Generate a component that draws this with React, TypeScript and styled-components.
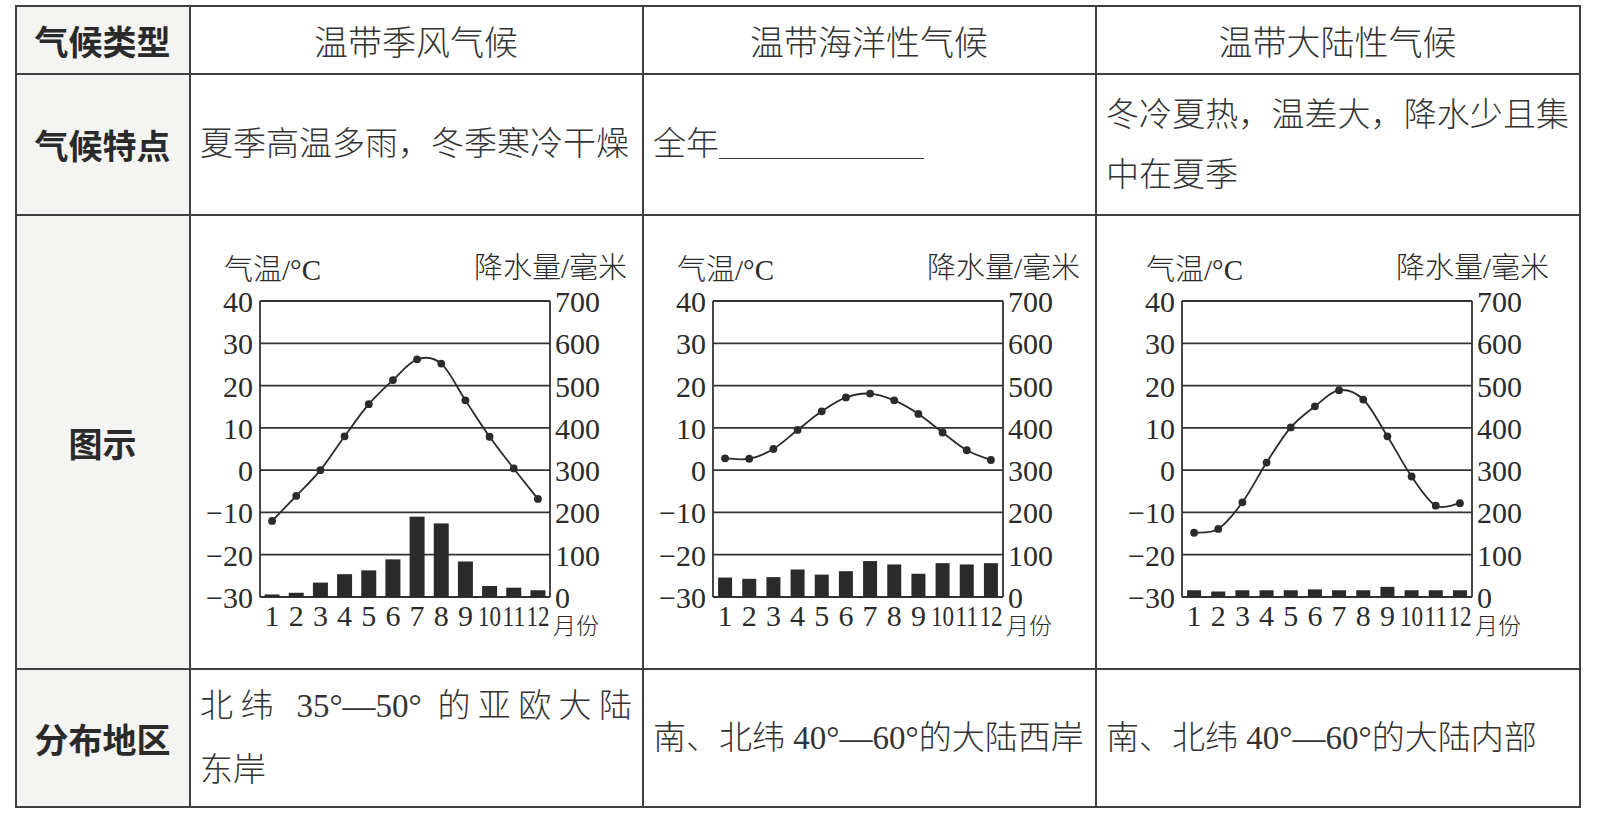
import React from "react";
import styled, { createGlobalStyle } from "styled-components";

const GlobalStyle = createGlobalStyle`
  html, body {
    margin: 0;
    padding: 0;
    background: #fff;
  }
  body {
    font-family: "Liberation Serif", "Noto Sans CJK SC", serif;
    color: #2b2b2b;
  }
`;

type ChartData = { temps: number[]; rain: number[]; barW: number };

const charts: ChartData[] = [
  {
    temps: [-12, -6.1, 0, 8, 15.6, 21.3, 26.2, 25.2, 16.5, 7.9, 0.4, -6.8],
    rain: [6, 10, 34, 54, 63, 89, 190, 174, 84, 26, 22, 16],
    barW: 15,
  },
  {
    temps: [2.8, 2.7, 5.0, 9.5, 13.9, 17.2, 18.1, 16.5, 13.3, 8.9, 4.7, 2.4],
    rain: [46, 43, 47, 65, 53, 61, 85, 77, 55, 80, 77, 80],
    barW: 14,
  },
  {
    temps: [-14.8, -13.9, -7.6, 1.8, 10.1, 15.1, 18.9, 16.7, 8.0, -1.5, -8.4, -7.8],
    rain: [16, 13, 16, 16, 16, 18, 16, 16, 24, 16, 16, 16],
    barW: 14,
  },
];

// plot box inside the chart svg
const L = 56;
const T = 59;
const W = 290;
const H = 296;
const B = T + H;
const R = L + W;

const ty = (t: number) => T + ((40 - t) * H) / 70;
const py = (p: number) => B - (p * H) / 700;
const mx = (i: number) => L + ((i + 0.5) * W) / 12;

function smooth(pts: { x: number; y: number }[]) {
  let d = `M${pts[0].x},${pts[0].y}`;
  for (let i = 0; i < pts.length - 1; i++) {
    const p0 = pts[i - 1] || pts[i];
    const p1 = pts[i];
    const p2 = pts[i + 1];
    const p3 = pts[i + 2] || p2;
    const c1x = p1.x + (p2.x - p0.x) / 6;
    const c1y = p1.y + (p2.y - p0.y) / 6;
    const c2x = p2.x - (p3.x - p1.x) / 6;
    const c2y = p2.y - (p3.y - p1.y) / 6;
    d += ` C${c1x},${c1y} ${c2x},${c2y} ${p2.x},${p2.y}`;
  }
  return d;
}

function Chart({ temps, rain, barW }: ChartData) {
  const pts = temps.map((t, i) => ({ x: mx(i), y: ty(t) }));
  const left = [40, 30, 20, 10, 0, -10, -20, -30];
  const right = [700, 600, 500, 400, 300, 200, 100, 0];

  return (
    <Svg width={424} height={400} viewBox="0 0 424 400">
      <AxisTitle x={20} y={38}>
        气温/°C
      </AxisTitle>
      <AxisTitle x={423} y={36} textAnchor="end">
        降水量/毫米
      </AxisTitle>

      {left.map((v, k) => (
        <line
          key={k}
          x1={L}
          x2={R}
          y1={T + (k * H) / 7}
          y2={T + (k * H) / 7}
          stroke="#333"
          strokeWidth={1.8}
        />
      ))}
      <line x1={L} x2={L} y1={T} y2={B} stroke="#333" strokeWidth={1.8} />
      <line x1={R} x2={R} y1={T} y2={B} stroke="#333" strokeWidth={1.8} />

      {rain.map((p, i) => (
        <rect
          key={i}
          x={mx(i) - barW / 2}
          y={py(p)}
          width={barW}
          height={B - py(p)}
          fill="#2a2a2a"
        />
      ))}

      <path d={smooth(pts)} fill="none" stroke="#2b2b2b" strokeWidth={1.8} />
      {pts.map((p, i) => (
        <circle key={i} cx={p.x} cy={p.y} r={3.9} fill="#2b2b2b" />
      ))}

      {left.map((v, k) => (
        <Tick key={k} x={L - 7} y={T + (k * H) / 7 + 11} textAnchor="end">
          {v < 0 ? `−${-v}` : v}
        </Tick>
      ))}
      {right.map((v, k) => (
        <Tick key={k} x={R + 5} y={T + (k * H) / 7 + 11}>
          {v}
        </Tick>
      ))}
      {temps.map((_, i) =>
        i < 9 ? (
          <Tick key={i} x={mx(i)} y={B + 29} textAnchor="middle">
            {i + 1}
          </Tick>
        ) : (
          <Tick
            key={i}
            x={mx(i) - 11.5}
            y={B + 29}
            textLength={23}
            lengthAdjust="spacingAndGlyphs"
          >
            {i + 1}
          </Tick>
        )
      )}
      <MonthUnit x={R + 3} y={B + 37}>
        月份
      </MonthUnit>
    </Svg>
  );
}

export default function App() {
  return (
    <>
      <GlobalStyle />
      <Page>
        <Table>
          <Cell $head>
            <Label>气候类型</Label>
          </Cell>
          <Cell $title>温带季风气候</Cell>
          <Cell $title>温带海洋性气候</Cell>
          <Cell $title>温带大陆性气候</Cell>

          <Cell $head>
            <Label>气候特点</Label>
          </Cell>
          <Cell $left>
            <Line>夏季高温多雨，冬季寒冷干燥</Line>
          </Cell>
          <Cell $left>
            <Line>
              全年
              <Blank />
            </Line>
          </Cell>
          <Cell $left>
            <Line $justify $lh={60}>
              冬冷夏热，温差大，降水少且集
            </Line>
            <Line $lh={60}>中在夏季</Line>
          </Cell>

          <Cell $head>
            <Label>图示</Label>
          </Cell>
          {charts.map((c, i) => (
            <Cell key={i}>
              <Chart {...c} />
            </Cell>
          ))}

          <Cell $head>
            <Label>分布地区</Label>
          </Cell>
          <Cell $left>
            <Line $justify $lh={64}>
              北纬 35°—50° 的亚欧大陆
            </Line>
            <Line $lh={64}>东岸</Line>
          </Cell>
          <Cell $left>
            <Line>南、北纬 40°—60°的大陆西岸</Line>
          </Cell>
          <Cell $left>
            <Line>南、北纬 40°—60°的大陆内部</Line>
          </Cell>
        </Table>
      </Page>
    </>
  );
}

const Page = styled.div`
  padding: 5px 0 0 15px;
`;

const Table = styled.div`
  display: grid;
  grid-template-columns: 172px 451px 451px 482px;
  grid-template-rows: 66px 139px 452px 136px;
  gap: 2px;
  padding: 2px;
  width: 1566px;
  height: 803px;
  box-sizing: border-box;
  background: #3f3f3f;
`;

const Cell = styled.div<{ $head?: boolean; $left?: boolean; $title?: boolean }>`
  display: flex;
  flex-direction: column;
  justify-content: center;
  align-items: ${(p) => (p.$left ? "stretch" : "center")};
  padding: 0 10px 0 9px;
  background: ${(p) => (p.$head ? "#f4f4f3" : "#fff")};
  font-size: ${(p) => (p.$title ? "34px" : "33px")};
  font-weight: 300;
  color: #333;
  overflow: hidden;
`;

const Label = styled.span`
  font-family: "Noto Sans CJK SC", sans-serif;
  font-size: 34px;
  font-weight: 700;
  color: #2a2a2a;
`;

const Line = styled.div<{ $justify?: boolean; $lh?: number }>`
  line-height: ${(p) => (p.$lh ? `${p.$lh}px` : "1.3")};
  text-align: left;
  text-align-last: ${(p) => (p.$justify ? "justify" : "left")};
  white-space: ${(p) => (p.$justify ? "normal" : "nowrap")};
`;

const Blank = styled.span`
  display: inline-block;
  width: 205px;
  height: 0;
  border-bottom: 1.5px solid #333;
  vertical-align: -4px;
`;

const Svg = styled.svg`
  display: block;
  flex: none;
`;

const Tick = styled.text`
  font-family: "Liberation Serif", serif;
  font-size: 30px;
  fill: #2b2b2b;
`;

const AxisTitle = styled.text`
  font-family: "Liberation Serif", "Noto Sans CJK SC", serif;
  font-size: 29px;
  fill: #2b2b2b;
`;

const MonthUnit = styled.text`
  font-family: "Noto Sans CJK SC", sans-serif;
  font-size: 23px;
  fill: #2b2b2b;
`;
